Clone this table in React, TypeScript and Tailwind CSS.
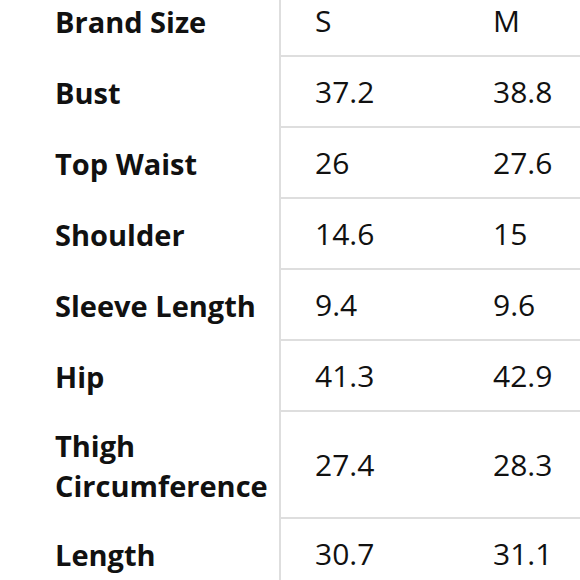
import React from "react";

const rows: { label: string[]; s: string; m: string; h: string }[] = [
  { label: ["Brand Size"], s: "S", m: "M", h: "h-[71px]" },
  { label: ["Bust"], s: "37.2", m: "38.8", h: "h-[71px]" },
  { label: ["Top Waist"], s: "26", m: "27.6", h: "h-[71px]" },
  { label: ["Shoulder"], s: "14.6", m: "15", h: "h-[71px]" },
  { label: ["Sleeve Length"], s: "9.4", m: "9.6", h: "h-[71px]" },
  { label: ["Hip"], s: "41.3", m: "42.9", h: "h-[71px]" },
  { label: ["Thigh", "Circumference"], s: "27.4", m: "28.3", h: "h-[107px]" },
  { label: ["Length"], s: "30.7", m: "31.1", h: "h-[71px]" },
];

export default function App() {
  return (
    <div
      className="w-[580px] h-[580px] overflow-hidden bg-white text-[#111111]"
      style={{ fontFamily: '"Open Sans", "Noto Sans", sans-serif' }}
    >
      <div className="-mt-[14px] flex flex-col">
        {rows.map((r, i) => (
          <div key={i} className={`flex ${r.h}`}>
            <div className="w-[281px] shrink-0 border-r-2 border-[#dedede] pl-[55px] flex flex-col justify-center text-[29px] font-bold leading-[40px]">
              {r.label.map((l, j) => (
                <div key={j}>{l}</div>
              ))}
            </div>
            <div className="flex-1 flex border-b-2 border-[#dedede] text-[30px] leading-[40px]">
              <div className="w-[178px] shrink-0 pl-[34px] flex items-center">{r.s}</div>
              <div className="flex-1 pl-[34px] flex items-center">{r.m}</div>
            </div>
          </div>
        ))}
      </div>
    </div>
  );
}
